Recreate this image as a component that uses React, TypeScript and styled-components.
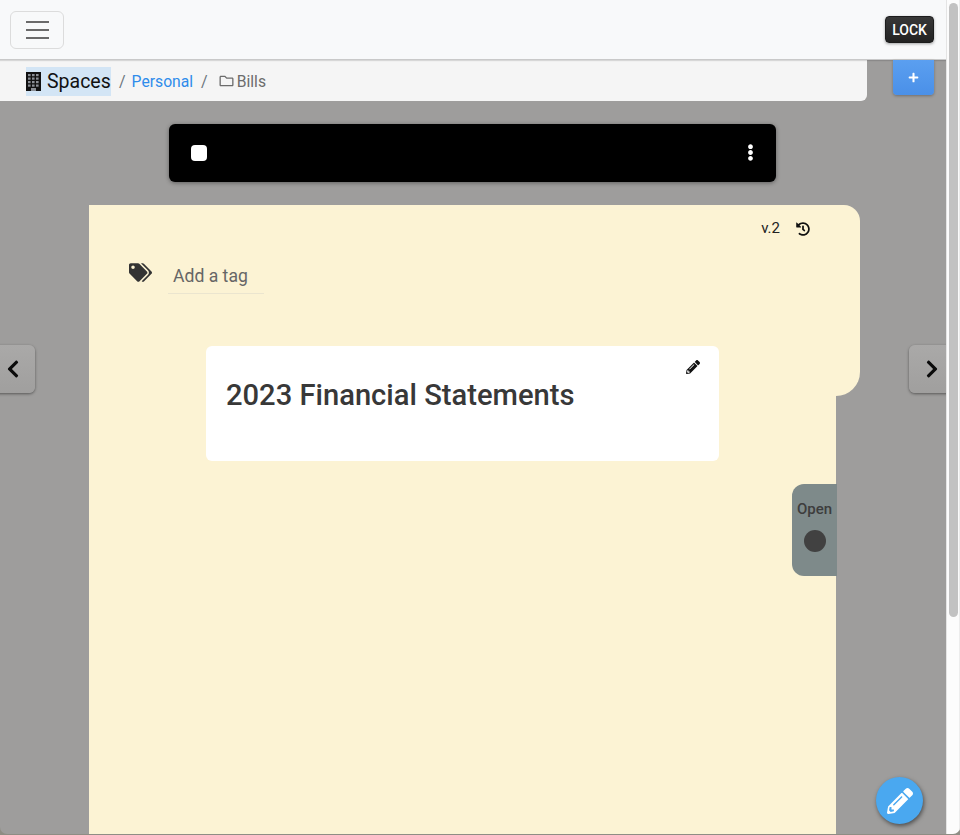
import React from "react";
import styled, { createGlobalStyle } from "styled-components";
import {
  FaChevronLeft,
  FaChevronRight,
  FaEllipsisV,
  FaHistory,
  FaPencilAlt,
  FaPlus,
  FaRegFolder,
  FaTags,
} from "react-icons/fa";

const GlobalStyle = createGlobalStyle`
  html, body {
    margin: 0;
    padding: 0;
    height: 835px;
    overflow: hidden;
    background: #8e8d84;
    font-family: Roboto, "Liberation Sans", sans-serif;
  }
`;

const Page = styled.div`
  display: flex;
  width: 960px;
  height: 834px;
  overflow: hidden;
  border-radius: 0 0 7px 7px;
`;

const Main = styled.div`
  position: relative;
  width: 946px;
  height: 834px;
  overflow: hidden;
  background: #9e9d9c;
`;

const Scrollbar = styled.div`
  width: 14px;
  height: 834px;
  padding: 3px 2px;
  box-sizing: border-box;
  background: #fcfcfc;
  border-left: 1px solid #e4e4e4;
  border-right: 1px solid #ececec;
`;

const ScrollThumb = styled.div`
  width: 9px;
  height: 614px;
  border-radius: 5px;
  background: #c2c2c2;
`;

const Navbar = styled.nav`
  position: relative;
  z-index: 1;
  height: 60px;
  box-sizing: border-box;
  padding: 0 12px 0 10px;
  display: flex;
  align-items: center;
  justify-content: space-between;
  background: #f8f9fa;
  border-bottom: 1px solid #c9c9c9;
  box-shadow: 0 1px 1px rgba(0, 0, 0, 0.12);
`;

const Burger = styled.button`
  width: 54px;
  height: 38px;
  padding: 0;
  display: flex;
  flex-direction: column;
  align-items: center;
  justify-content: center;
  gap: 6px;
  background: transparent;
  border: 1px solid #dcdcdc;
  border-radius: 6px;
`;

const BurgerLine = styled.span`
  width: 23px;
  height: 2px;
  background: #6a6a6a;
`;

const LockButton = styled.button`
  width: 49px;
  height: 27px;
  padding: 0;
  color: #fff;
  font: 500 14px Roboto, sans-serif;
  background: linear-gradient(#383838, #222);
  border: 1px solid #1c1c1c;
  border-radius: 4px;
  box-shadow: 0 1px 3px rgba(0, 0, 0, 0.35);
`;

const BreadcrumbBar = styled.div`
  width: 867px;
  height: 41px;
  box-sizing: border-box;
  padding: 1px 0 0 26px;
  display: flex;
  align-items: center;
  background: #f5f5f5;
  border-radius: 0 0 6px 0;
`;

const SpacesCrumb = styled.span`
  display: flex;
  align-items: center;
  gap: 6px;
  height: 29px;
  width: 85px;
  color: #111;
  font-size: 19.5px;
  background: #d3e5f5;
`;

const BuildingIcon = styled.svg`
  flex: none;
  width: 15px;
  height: 19px;
`;

const Divider = styled.span<{ $gap: number }>`
  margin: 0 ${(p) => p.$gap}px 0 8px;
  color: #6c757d;
  font-size: 16px;
`;

const PersonalLink = styled.a`
  color: #2f8ceb;
  font-size: 15.7px;
`;

const BillsCrumb = styled.span`
  display: flex;
  align-items: center;
  gap: 3px;
  color: #6c6c6c;
  font-size: 15.7px;

  svg {
    width: 15px;
    height: 14px;
  }
`;

const AddButton = styled.button`
  position: absolute;
  z-index: 2;
  top: 60px;
  left: 893px;
  width: 41px;
  height: 35px;
  padding: 0;
  display: flex;
  align-items: center;
  justify-content: center;
  color: #fff;
  background: linear-gradient(#5b9ff0, #4a90e8);
  border: 0;
  border-radius: 0 0 4px 4px;
  box-shadow: 0 1px 3px rgba(0, 0, 0, 0.3);
`;

const Toolbar = styled.div`
  width: 607px;
  height: 58px;
  margin: 23px 0 23px 169px;
  box-sizing: border-box;
  padding: 0 17px 0 22px;
  display: flex;
  align-items: center;
  justify-content: space-between;
  background: #000;
  border-radius: 6px;
  box-shadow: 0 1px 4px rgba(0, 0, 0, 0.4);
`;

const Checkbox = styled.span`
  width: 16px;
  height: 16px;
  background: #fff;
  border-radius: 4px;
`;

const MenuDots = styled.span`
  display: flex;
  margin-bottom: 2px;
  color: #fff;
`;

const Folder = styled.section`
  position: relative;
  width: 747px;
  height: 630px;
  margin-left: 89px;
  background: #fcf3d4;
  border-radius: 0 16px 0 0;

  &::before {
    content: "";
    position: absolute;
    top: 0;
    left: 0;
    width: 771px;
    height: 191px;
    background: #fcf3d4;
    border-radius: 0 16px 24px 0;
  }
`;

const FolderContent = styled.div`
  position: relative;
  width: 771px;
`;

const VersionRow = styled.div`
  height: 45px;
  box-sizing: border-box;
  padding: 14px 50px 0 0;
  display: flex;
  justify-content: flex-end;
  align-items: flex-start;
  gap: 16px;
  color: #222;
  font-size: 15px;

  svg {
    margin-top: 3px;
    color: #111;
  }
`;

const TagRow = styled.div`
  height: 96px;
  padding-left: 40px;
  display: flex;
  align-items: flex-start;
  color: #333;
`;

const TagIcon = styled.span`
  display: flex;
  margin-top: 11px;
  color: #333;
`;

const TagInput = styled.div`
  width: 96px;
  height: 43px;
  box-sizing: border-box;
  margin: 1px 0 0 16px;
  padding: 15px 0 0 5px;
  color: #666;
  font-size: 17.6px;
  border-bottom: 1px solid #ebe5cf;
`;

const NoteCard = styled.article`
  position: relative;
  width: 513px;
  height: 115px;
  margin-left: 117px;
  box-sizing: border-box;
  padding: 31px 20px 0;
  background: #fff;
  border-radius: 6px;
`;

const NoteTitle = styled.h1`
  margin: 0;
  color: #383838;
  font-size: 29.15px;
  font-weight: 500;
  line-height: 36px;
`;

const NoteEdit = styled.span`
  position: absolute;
  top: 14px;
  right: 19px;
  display: flex;
  color: #111;
`;

const OpenToggle = styled.div`
  position: absolute;
  top: 279px;
  right: -1px;
  width: 45px;
  height: 92px;
  box-sizing: border-box;
  padding-top: 16px;
  display: flex;
  flex-direction: column;
  align-items: center;
  gap: 12px;
  background: #7e8a8a;
  border-radius: 12px 0 0 12px;
`;

const OpenLabel = styled.span`
  color: #3d3d3d;
  font-size: 15px;
  font-weight: 500;
`;

const OpenDot = styled.span`
  width: 22px;
  height: 22px;
  background: #414141;
  border-radius: 50%;
`;

const SideArrow = styled.button<{ $left: number }>`
  position: absolute;
  top: 345px;
  left: ${(p) => p.$left}px;
  width: 45px;
  height: 48px;
  padding: 0;
  display: flex;
  align-items: center;
  justify-content: center;
  color: #0b0b0b;
  background: linear-gradient(#aaa9a8, #a09f9e);
  border: 0;
  border-radius: 6px;
  box-shadow: 0 1px 3px rgba(0, 0, 0, 0.45);
`;

const EditFab = styled.button`
  position: absolute;
  top: 777px;
  left: 876px;
  width: 47px;
  height: 47px;
  padding: 0;
  display: flex;
  align-items: center;
  justify-content: center;
  color: #fff;
  background: #4aa8f0;
  border: 0;
  border-radius: 50%;
  box-shadow: 1px 2px 4px rgba(0, 0, 0, 0.5);
`;

const windowRows = [2, 5.5, 9, 12.5];
const windowCols = [2, 6, 10];

export default function App() {
  return (
    <Page>
      <GlobalStyle />
      <Main>
        <Navbar>
          <Burger>
            <BurgerLine />
            <BurgerLine />
            <BurgerLine />
          </Burger>
          <LockButton>LOCK</LockButton>
        </Navbar>
        <BreadcrumbBar>
          <SpacesCrumb>
            <BuildingIcon viewBox="0 0 15 19">
              <rect width="15" height="19" fill="#111" />
              {windowRows.map((y) =>
                windowCols.map((x) => (
                  <rect key={`${x}-${y}`} x={x} y={y} width="2.6" height="2.2" fill="#8b8f96" />
                ))
              )}
              <rect x="5" y="16" width="5" height="3" fill="#8b8f96" />
            </BuildingIcon>
            Spaces
          </SpacesCrumb>
          <Divider $gap={6}>/</Divider>
          <PersonalLink>Personal</PersonalLink>
          <Divider $gap={11}>/</Divider>
          <BillsCrumb>
            <FaRegFolder />
            Bills
          </BillsCrumb>
        </BreadcrumbBar>
        <AddButton>
          <FaPlus size={11} />
        </AddButton>
        <Toolbar>
          <Checkbox />
          <MenuDots>
            <FaEllipsisV size={17} />
          </MenuDots>
        </Toolbar>
        <Folder>
          <FolderContent>
            <VersionRow>
              v.2
              <FaHistory size={14} />
            </VersionRow>
            <TagRow>
              <TagIcon>
                <FaTags size={23} />
              </TagIcon>
              <TagInput>Add a tag</TagInput>
            </TagRow>
            <NoteCard>
              <NoteTitle>2023 Financial Statements</NoteTitle>
              <NoteEdit>
                <FaPencilAlt size={14} />
              </NoteEdit>
            </NoteCard>
          </FolderContent>
          <OpenToggle>
            <OpenLabel>Open</OpenLabel>
            <OpenDot />
          </OpenToggle>
        </Folder>
        <SideArrow $left={-10}>
          <FaChevronLeft size={20} />
        </SideArrow>
        <SideArrow $left={909}>
          <FaChevronRight size={20} />
        </SideArrow>
        <EditFab>
          <FaPencilAlt size={26} />
        </EditFab>
      </Main>
      <Scrollbar>
        <ScrollThumb />
      </Scrollbar>
    </Page>
  );
}
